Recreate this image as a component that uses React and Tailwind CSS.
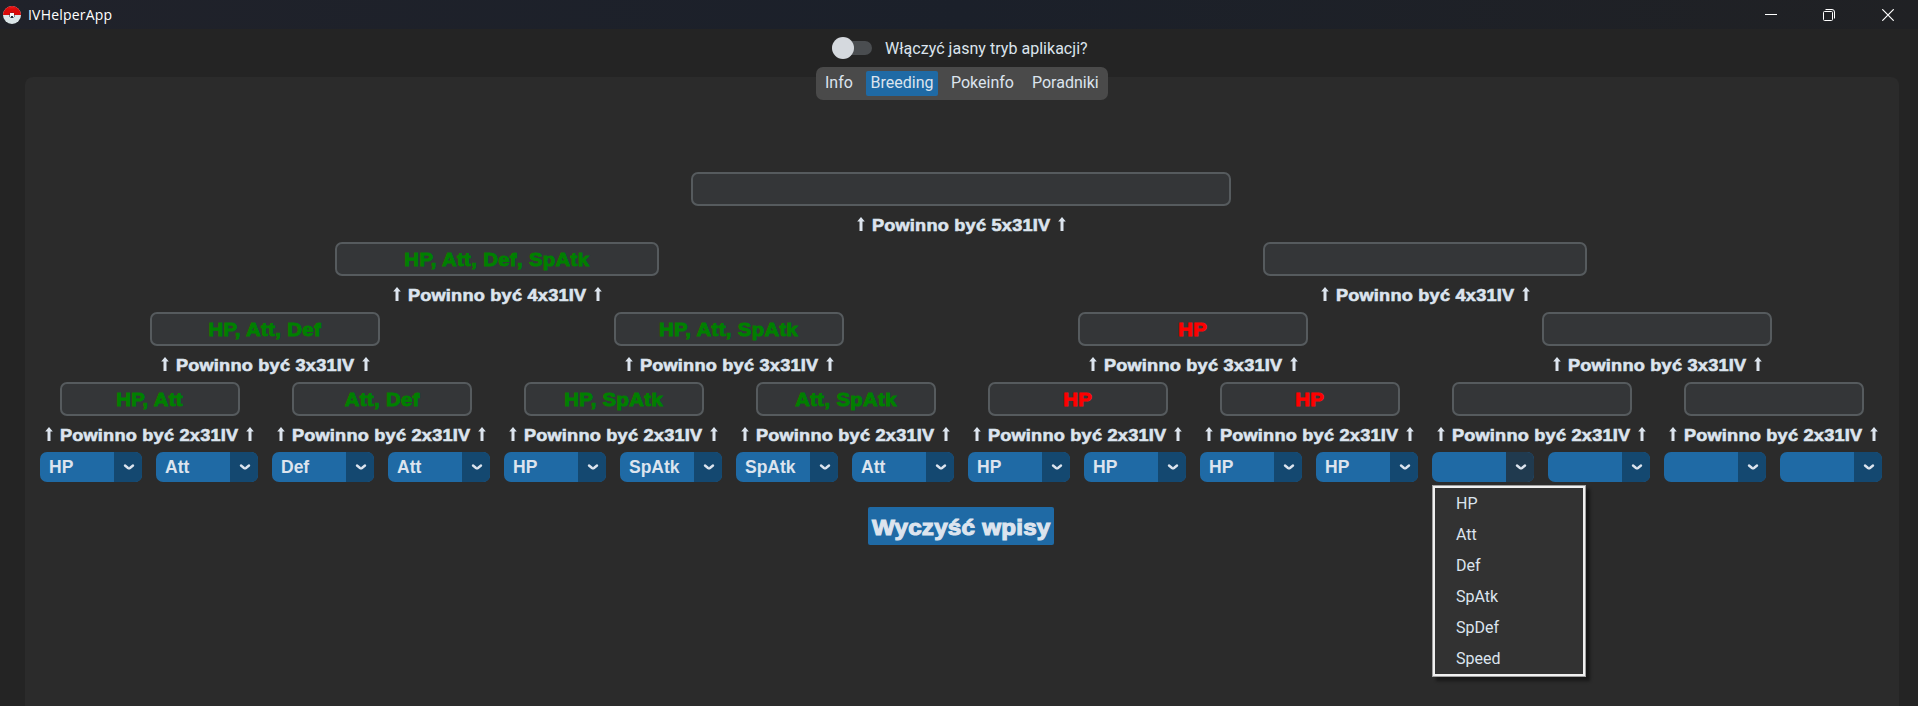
const levels = [
  { cols: "grid-cols-1", width: "w-[540px]", label: "5x31IV", items: [""] },
  { cols: "grid-cols-2", width: "w-[324px]", label: "4x31IV", items: ["HP, Att, Def, SpAtk", ""] },
  { cols: "grid-cols-4", width: "w-[230px]", label: "3x31IV", items: ["HP, Att, Def", "HP, Att, SpAtk", "HP", ""] },
  {
    cols: "grid-cols-8",
    width: "w-[180px] ml-[2px]",
    label: "2x31IV",
    items: ["HP, Att", "Att, Def", "HP, SpAtk", "Att, SpAtk", "HP", "HP", "", ""],
  },
];

const picks = ["HP", "Att", "Def", "Att", "HP", "SpAtk", "SpAtk", "Att", "HP", "HP", "HP", "HP", "", "", "", ""];
const options = ["HP", "Att", "Def", "SpAtk", "SpDef", "Speed"];
const OPEN_INDEX = 12;

function Pokeball() {
  return (
    <svg width="18" height="18" viewBox="0 0 18 18">
      <circle cx="9" cy="9" r="9" fill="#dbe6ea" />
      <path d="M0 9a9 9 0 0 1 18 0z" fill="#d90a0a" />
      <path d="M3 3.5A9 9 0 0 1 15 3.5L13 2.2H5z" fill="#f52020" />
      <path d="M6.500 9a2.500 2.500 0 0 1 5 0v1.500L10 12H8l-1.500-1.500z" fill="#22303c" />
      <rect x="7" y="7" width="4" height="4" fill="#f4f8fa" />
      <rect x="8" y="10" width="2" height="1" fill="#22303c" />
    </svg>
  );
}

function TitleBar() {
  return (
    <header className="flex h-[29px] items-center bg-linear-to-r from-[#20222a] via-[#1b202a] to-[#202124] pl-[3px]">
      <div className="flex h-full items-center gap-[7px]">
        <Pokeball />
        <span className="font-['Open_Sans',sans-serif] text-[14px] leading-[20px] tracking-[0.2px] text-white">
          IVHelperApp
        </span>
      </div>
      <div className="ml-auto flex h-full items-center pr-[24px] text-white">
        <svg width="12" height="12" viewBox="0 0 12 12" className="mr-[46px]">
          <path d="M0 5.500h12" stroke="currentColor" />
        </svg>
        <svg width="12" height="12" viewBox="0 0 12 12" className="mr-[47px]" fill="none" stroke="currentColor">
          <rect x="0.500" y="2.500" width="9" height="9" rx="1" />
          <path d="M2.500 0.500H9a2.500 2.500 0 0 1 2.500 2.500v6.500" />
        </svg>
        <svg width="12" height="12" viewBox="0 0 12 12">
          <path d="M0.300 0.300l11.400 11.400M11.700 0.300L0.300 11.700" stroke="currentColor" strokeWidth="1.200" />
        </svg>
      </div>
    </header>
  );
}

function UpArrow() {
  return (
    <svg width="8" height="14" viewBox="0 0 8 14" className="mb-[2px] shrink-0" fill="currentColor">
      <path d="M4 0L7.800 4.500H5.500V14H2.500V4.500H0.200z" />
    </svg>
  );
}

function Entry({ value, width, label }) {
  const color = value === "HP" ? "text-[#ff0000]" : "text-[#008000]";
  return (
    <div className="flex h-[70px] flex-col items-center">
      <div
        className={`${width} ${color} flex h-[34px] items-center justify-center rounded-[7px] border-2 border-[#565b5e] bg-[#343638] pt-[2px] text-[18px] font-bold tracking-[0.3px]`}
      >
        <span className="scale-x-[1.13] whitespace-nowrap [-webkit-text-stroke:0.9px_currentColor]">{value}</span>
      </div>
      <div className="mt-[8px] ml-px flex items-center gap-[6px] text-[16.5px] leading-[20px] font-bold whitespace-nowrap text-[#dce4ee]">
        <UpArrow />
        <span className="flex w-[181px] justify-center pt-px">
          <span className="scale-x-[1.1] tracking-[0.2px] [-webkit-text-stroke:0.6px_currentColor]">
            Powinno być {label}
          </span>
        </span>
        <UpArrow />
      </div>
    </div>
  );
}

function Menu() {
  return (
    <ul className="absolute top-[33px] left-0 z-10 h-[192px] w-[154px] border border-[#a0a0a0] bg-[#323232] font-[Roboto,sans-serif] text-[16px] text-[#dce4ee] shadow-[4px_4px_3px_rgba(0,0,0,0.45)] outline-2 -outline-offset-3 outline-[#f0f0f0]">
      {options.map((o, i) => (
        <li key={o} className={`flex h-[31px] items-center pl-[23px] ${i === 0 ? "mt-[2px]" : ""}`}>
          {o}
        </li>
      ))}
    </ul>
  );
}

function Select({ value, open }) {
  return (
    <div className="relative h-[30px] w-[102px]">
      <div className="flex h-full overflow-hidden rounded-[7px] bg-[#1f6aa5]">
        <div className="flex w-[74px] items-center pl-[9px] text-[17.5px] font-bold text-[#dce4ee]">{value}</div>
        <div className={`flex flex-1 items-center justify-center pl-[2px] ${open ? "bg-[#203a4f]" : "bg-[#144870]"}`}>
          <svg width="12" height="8" viewBox="0 0 12 8" fill="none">
            <path
              d="M2 2.500L5 5Q6 5.700 7 5L10 2.500"
              stroke="#dce4ee"
              strokeWidth="2.400"
              strokeLinecap="round"
              strokeLinejoin="round"
            />
          </svg>
        </div>
      </div>
      {open && <Menu />}
    </div>
  );
}

export default function App() {
  return (
    <div className="flex h-[706px] w-[1918px] flex-col overflow-hidden bg-[#242424] font-['Liberation_Sans',Arial,sans-serif]">
      <TitleBar />
      <div className="flex h-[38px] items-center pl-[832px] font-[Roboto,sans-serif] text-[16px] text-[#dce4ee]">
        <div className="flex h-[14px] w-[40px] items-center rounded-full bg-[#4a4d50]">
          <div className="size-[22px] shrink-0 rounded-full bg-[#d5d9de]" />
        </div>
        <span className="ml-[13px] pt-[2px] tracking-[0.03px]">Włączyć jasny tryb aplikacji?</span>
      </div>
      <main className="mt-[10px] mr-[19px] ml-[25px] flex flex-1 flex-col items-center rounded-t-[8px] bg-[#2b2b2b]">
        <nav className="-mt-[10px] flex h-[33px] w-[292px] shrink-0 items-center rounded-[7px] bg-[#4a4a4a] pl-[9px] font-[Roboto,sans-serif] text-[16px] text-[#dce4ee]">
          <span className="w-[41px] pb-[2px]">Info</span>
          <span className="flex h-[25px] w-[72px] items-center justify-center rounded-[2px] bg-[#1f6aa5] pb-[2px]">
            Breeding
          </span>
          <span className="ml-[13px] w-[81px] pb-[2px]">Pokeinfo</span>
          <span className="pb-[2px]">Poradniki</span>
        </nav>
        <section className="mt-[72px] mr-[2px] w-[1856px]">
          {levels.map((level) => (
            <div key={level.label} className={`grid ${level.cols}`}>
              {level.items.map((value, i) => (
                <Entry key={i} value={value} width={level.width} label={level.label} />
              ))}
            </div>
          ))}
          <div className="flex gap-[14px] pl-[7px]">
            {picks.map((p, i) => (
              <Select key={i} value={p} open={i === OPEN_INDEX} />
            ))}
          </div>
        </section>
        <button className="mt-[25px] mr-[2px] flex h-[38px] w-[186px] items-center justify-center rounded-[2px] bg-[#1f6aa5] pt-[2px] text-[22px] font-bold tracking-[0.2px] whitespace-nowrap text-[#dce4ee]">
          <span className="scale-x-[1.1] [-webkit-text-stroke:1.1px_currentColor]">Wyczyść wpisy</span>
        </button>
      </main>
    </div>
  );
}
